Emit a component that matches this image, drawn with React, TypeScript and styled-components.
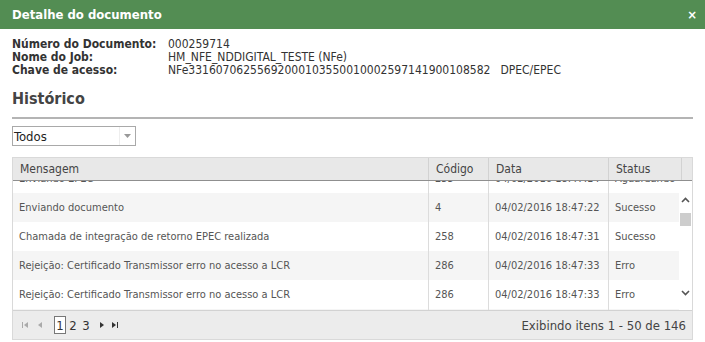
import React, { useEffect, useRef } from 'react';
import styled, { createGlobalStyle } from 'styled-components';

const FONT = '"DejaVu Sans Condensed", "DejaVu Sans", "Liberation Sans", sans-serif';

const GlobalStyle = createGlobalStyle`
  html, body { margin: 0; padding: 0; background: #fff; }
  body { font-family: ${FONT}; color: #333; }
  * { box-sizing: border-box; }
`;

interface HistoryRow {
  message: string;
  code: string;
  date: string;
  status: string;
}

const ROWS: HistoryRow[] = [
  { message: 'Enviando EPEC', code: '255', date: '04/02/2016 18:47:14', status: 'Aguardando' },
  { message: 'Enviando documento', code: '4', date: '04/02/2016 18:47:22', status: 'Sucesso' },
  { message: 'Chamada de integração de retorno EPEC realizada', code: '258', date: '04/02/2016 18:47:31', status: 'Sucesso' },
  { message: 'Rejeição: Certificado Transmissor erro no acesso a LCR', code: '286', date: '04/02/2016 18:47:33', status: 'Erro' },
  { message: 'Rejeição: Certificado Transmissor erro no acesso a LCR', code: '286', date: '04/02/2016 18:47:33', status: 'Erro' },
  { message: 'Documento rejeitado', code: '290', date: '04/02/2016 18:47:40', status: 'Erro' },
];

const COLS = '415px 60px 120px 73px 13px';

const Dialog = styled.div`
  width: 705px;
  height: 342px;
  background: #fff;
  display: flex;
  flex-direction: column;
`;

const TitleBar = styled.div`
  height: 29px;
  background: #538d53;
  color: #fff;
  display: flex;
  align-items: center;
  justify-content: space-between;
  padding: 0 8px 0 12px;
  font-size: 13px;
  font-weight: bold;
`;

const Close = styled.span`
  font-size: 13px;
  font-weight: bold;
`;

const Body = styled.div`
  padding: 9px 12px 0 12px;
  display: flex;
  flex-direction: column;
`;

const InfoGrid = styled.div`
  display: grid;
  grid-template-columns: 156px auto 1fr;
  font-size: 12px;
  line-height: 13px;
`;

const Label = styled.span`
  font-weight: bold;
  color: #333;
`;

const Value = styled.span<{ $pad?: number }>`
  color: #333;
  padding-left: ${p => p.$pad || 0}px;
`;

const SectionTitle = styled.h2`
  margin: 12px 0 0 0;
  font-size: 16px;
  font-weight: bold;
  color: #444;
  line-height: 20px;
`;

const Rule = styled.div`
  height: 2px;
  background: #b4b4b4;
  margin-top: 8px;
`;

const Select = styled.div`
  margin-top: 7px;
  width: 124px;
  height: 20px;
  border: 1px solid #a9a9a9;
  display: flex;
  align-items: center;
  justify-content: space-between;
  font-size: 13px;
  color: #222;
  padding: 0 0 0 1px;
`;

const SelectArrow = styled.span`
  width: 16px;
  height: 18px;
  display: flex;
  align-items: center;
  justify-content: center;
  border-left: 1px solid #eee;
`;

const Table = styled.div`
  margin-top: 11px;
  border: 1px solid #d9d9d9;
  display: flex;
  flex-direction: column;
`;

const HeaderRow = styled.div`
  display: grid;
  grid-template-columns: ${COLS};
  height: 23px;
  background: #e8e8e8;
  border-bottom: 1px solid #8f8f8f;
`;

const HeaderCell = styled.div<{ $first?: boolean }>`
  display: flex;
  align-items: center;
  padding-left: 7px;
  font-size: 12px;
  color: #444;
  border-left: ${p => (p.$first ? 'none' : '1px solid #d2d2d2')};
`;

const BodyWrap = styled.div`
  display: grid;
  grid-template-columns: 1fr 13px;
  height: 129px;
`;

const Scroller = styled.div`
  overflow: hidden;
  height: 129px;
`;

const Row = styled.div<{ $alt: boolean }>`
  display: grid;
  grid-template-columns: 415px 60px 120px 73px;
  height: 29px;
  background: ${p => (p.$alt ? '#f5f5f5' : '#fff')};
`;

const Cell = styled.div<{ $first?: boolean }>`
  display: flex;
  align-items: center;
  padding-left: 6px;
  font-size: 11px;
  color: #555;
  white-space: nowrap;
  overflow: hidden;
  border-left: ${p => (p.$first ? 'none' : '1px solid #dcdcdc')};
`;

const ScrollBar = styled.div`
  background: #fff;
  display: flex;
  flex-direction: column;
  align-items: center;
`;

const ScrollArrow = styled.div<{ $top?: number; $bottom?: number }>`
  height: 15px;
  display: flex;
  align-items: center;
  justify-content: center;
  width: 100%;
  margin-top: ${p => p.$top || 0}px;
  margin-bottom: ${p => p.$bottom || 0}px;
`;

const Thumb = styled.div`
  width: 11px;
  height: 13px;
  background: #cdcdcd;
  margin-top: 6px;
`;

const Spacer = styled.div`
  flex: 1;
`;

const Footer = styled.div`
  height: 29px;
  background: #ececec;
  border-top: 1px solid #d2d2d2;
  display: flex;
  align-items: center;
  justify-content: space-between;
  padding: 0 6px 0 6px;
`;

const Pager = styled.div`
  display: flex;
  align-items: center;
  gap: 1px;
  font-size: 13px;
  color: #333;
`;

const PagerIcon = styled.span<{ $dim?: boolean; $gap?: number }>`
  display: inline-flex;
  width: 12px;
  justify-content: center;
  margin-right: ${p => p.$gap || 0}px;
  color: ${p => (p.$dim ? '#aaa' : '#333')};
`;

const PageNum = styled.span<{ $active?: boolean; $gap?: number }>`
  display: inline-flex;
  align-items: center;
  justify-content: center;
  width: 12px;
  height: 18px;
  margin-right: ${p => p.$gap || 0}px;
  border: ${p => (p.$active ? '1px solid #777' : '1px solid transparent')};
  background: ${p => (p.$active ? '#fff' : 'transparent')};
`;

const Summary = styled.span`
  font-size: 13px;
  color: #444;
`;

const Chevron = ({ up }: { up?: boolean }) => (
  <svg width="9" height="6" viewBox="0 0 9 6">
    <path
      d={up ? 'M1 5 L4.5 1.5 L8 5' : 'M1 1 L4.5 4.5 L8 1'}
      fill="none"
      stroke="#555"
      strokeWidth="1.6"
    />
  </svg>
);

const FirstIcon = () => (
  <svg width="8" height="8" viewBox="0 0 8 8">
    <rect x="1" y="1" width="1" height="6" fill="currentColor" />
    <path d="M7 1 L3 4 L7 7 Z" fill="currentColor" />
  </svg>
);

const PrevIcon = () => (
  <svg width="8" height="8" viewBox="0 0 8 8">
    <path d="M6 1 L2 4 L6 7 Z" fill="currentColor" />
  </svg>
);

const NextIcon = () => (
  <svg width="8" height="8" viewBox="0 0 8 8">
    <path d="M2 1 L6 4 L2 7 Z" fill="currentColor" />
  </svg>
);

const LastIcon = () => (
  <svg width="8" height="8" viewBox="0 0 8 8">
    <path d="M1 1 L5 4 L1 7 Z" fill="currentColor" />
    <rect x="6" y="1" width="1" height="6" fill="currentColor" />
  </svg>
);

const App = () => {
  const scrollRef = useRef<HTMLDivElement>(null);

  useEffect(() => {
    if (scrollRef.current) scrollRef.current.scrollTop = 17;
  }, []);

  return (
    <>
      <GlobalStyle />
      <Dialog>
        <TitleBar>
          <span>Detalhe do documento</span>
          <Close>×</Close>
        </TitleBar>
        <Body>
          <InfoGrid>
            <Label>Número do Documento:</Label>
            <Value>000259714</Value>
            <span />
            <Label>Nome do Job:</Label>
            <Value>HM_NFE_NDDIGITAL_TESTE (NFe)</Value>
            <span />
            <Label>Chave de acesso:</Label>
            <Value>NFe33160706255692000103550010002597141900108582</Value>
            <Value $pad={10}>DPEC/EPEC</Value>
          </InfoGrid>
          <SectionTitle>Histórico</SectionTitle>
          <Rule />
          <Select>
            Todos
            <SelectArrow>
              <svg width="7" height="4" viewBox="0 0 7 4">
                <path d="M0 0 L7 0 L3.5 4 Z" fill="#999" />
              </svg>
            </SelectArrow>
          </Select>
          <Table>
            <HeaderRow>
              <HeaderCell $first>Mensagem</HeaderCell>
              <HeaderCell>Código</HeaderCell>
              <HeaderCell>Data</HeaderCell>
              <HeaderCell>Status</HeaderCell>
              <HeaderCell />
            </HeaderRow>
            <BodyWrap>
              <Scroller ref={scrollRef}>
                {ROWS.map((r, i) => (
                  <Row key={i} $alt={i % 2 === 1}>
                    <Cell $first>{r.message}</Cell>
                    <Cell>{r.code}</Cell>
                    <Cell>{r.date}</Cell>
                    <Cell>{r.status}</Cell>
                  </Row>
                ))}
              </Scroller>
              <ScrollBar>
                <ScrollArrow $top={11}>
                  <Chevron up />
                </ScrollArrow>
                <Thumb />
                <Spacer />
                <ScrollArrow $bottom={10}>
                  <Chevron />
                </ScrollArrow>
              </ScrollBar>
            </BodyWrap>
            <Footer>
              <Pager>
                <PagerIcon $dim $gap={2}><FirstIcon /></PagerIcon>
                <PagerIcon $dim $gap={7}><PrevIcon /></PagerIcon>
                <PageNum $active>1</PageNum>
                <PageNum>2</PageNum>
                <PageNum $gap={3}>3</PageNum>
                <PagerIcon><NextIcon /></PagerIcon>
                <PagerIcon><LastIcon /></PagerIcon>
              </Pager>
              <Summary>Exibindo itens 1 - 50 de 146</Summary>
            </Footer>
          </Table>
        </Body>
      </Dialog>
    </>
  );
};

export default App;
